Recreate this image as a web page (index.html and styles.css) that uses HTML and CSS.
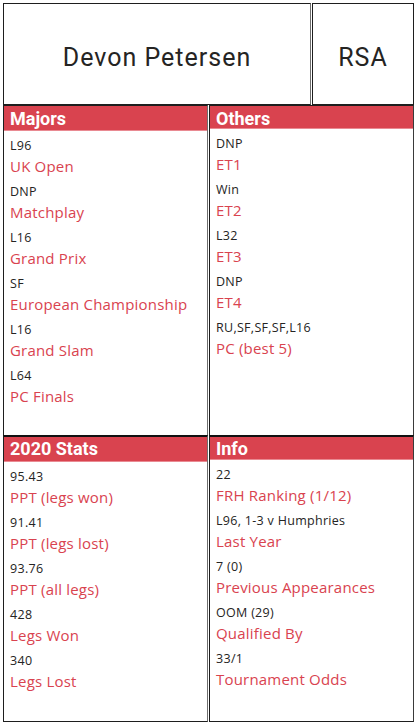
FILE: index.html
```html
<!DOCTYPE html>
<html lang="en">
<head>
<meta charset="utf-8">
<title>Devon Petersen</title>
<link rel="stylesheet" href="styles.css">
</head>
<body>
<div class="page">
  <header class="top">
    <div class="box name">Devon Petersen</div>
    <div class="box country">RSA</div>
  </header>
  <main class="grid">
    <section class="panel upper">
      <h2 class="bar tall">Majors</h2>
      <div class="items">
        <div class="item"><div class="val">L96</div><div class="lbl">UK Open</div></div>
        <div class="item"><div class="val">DNP</div><div class="lbl">Matchplay</div></div>
        <div class="item"><div class="val">L16</div><div class="lbl">Grand Prix</div></div>
        <div class="item"><div class="val">SF</div><div class="lbl">European Championship</div></div>
        <div class="item"><div class="val">L16</div><div class="lbl">Grand Slam</div></div>
        <div class="item"><div class="val">L64</div><div class="lbl">PC Finals</div></div>
      </div>
    </section>
    <section class="panel upper right">
      <h2 class="bar short">Others</h2>
      <div class="items">
        <div class="item"><div class="val">DNP</div><div class="lbl">ET1</div></div>
        <div class="item"><div class="val">Win</div><div class="lbl">ET2</div></div>
        <div class="item"><div class="val">L32</div><div class="lbl">ET3</div></div>
        <div class="item"><div class="val">DNP</div><div class="lbl">ET4</div></div>
        <div class="item"><div class="val">RU,SF,SF,SF,L16</div><div class="lbl">PC (best 5)</div></div>
      </div>
    </section>
    <section class="panel lower">
      <h2 class="bar tall">2020 Stats</h2>
      <div class="items">
        <div class="item"><div class="val">95.43</div><div class="lbl">PPT (legs won)</div></div>
        <div class="item"><div class="val">91.41</div><div class="lbl">PPT (legs lost)</div></div>
        <div class="item"><div class="val">93.76</div><div class="lbl">PPT (all legs)</div></div>
        <div class="item"><div class="val">428</div><div class="lbl">Legs Won</div></div>
        <div class="item"><div class="val">340</div><div class="lbl">Legs Lost</div></div>
      </div>
    </section>
    <section class="panel lower right">
      <h2 class="bar short">Info</h2>
      <div class="items">
        <div class="item"><div class="val">22</div><div class="lbl">FRH Ranking (1/12)</div></div>
        <div class="item"><div class="val">L96, 1-3 v Humphries</div><div class="lbl">Last Year</div></div>
        <div class="item"><div class="val">7 (0)</div><div class="lbl">Previous Appearances</div></div>
        <div class="item"><div class="val">OOM (29)</div><div class="lbl">Qualified By</div></div>
        <div class="item"><div class="val">33/1</div><div class="lbl">Tournament Odds</div></div>
      </div>
    </section>
  </main>
</div>
</body>
</html>
```

FILE: styles.css
```css
* { box-sizing: border-box; }

html, body {
  margin: 0;
  padding: 0;
  background: #ffffff;
}

.page {
  width: 420px;
  padding: 3px 6px 0 3px;
}

.top {
  display: flex;
  gap: 1px;
  height: 102px;
}

.box {
  border: 1px solid #1e1e1e;
  display: flex;
  align-items: center;
  justify-content: center;
  padding-top: 6px;
  font-family: Roboto, "Liberation Sans", sans-serif;
  font-size: 25px;
  letter-spacing: 1px;
  color: #252423;
}

.name {
  width: 308px;
  border-right-color: #6e6e6e;
}

.country {
  flex: 1;
}

.grid {
  display: grid;
  grid-template-columns: 205px 205px;
  grid-template-rows: 330px 287px;
  column-gap: 1px;
}

.panel {
  border: 1px solid #1e1e1e;
  border-right-color: #6e6e6e;
  display: flex;
  flex-direction: column;
}

.panel.right {
  border-right-color: #3a3a3a;
}

.panel.upper {
  border-bottom: none;
}

.panel.lower {
  border-top: 2px solid #111;
}

.bar {
  margin: 0;
  background: #d9434f;
  color: #ffffff;
  font-family: Roboto, "Liberation Sans", sans-serif;
  font-weight: 700;
  font-size: 18px;
  line-height: 23px;
  padding: 1px 0 0 6px;
  border-bottom: 1px solid #e98a92;
}

.lower .bar {
  padding-top: 0;
}

.bar.tall {
  height: 25px;
}

.bar.short {
  height: 23px;
}

.items {
  padding: 6px 0 0 6px;
  display: flex;
  flex-direction: column;
  gap: 6px;
  font-family: "Open Sans", "Noto Sans", sans-serif;
}

.val {
  font-size: 12.5px;
  line-height: 18px;
  letter-spacing: 0.3px;
  color: #252423;
}

.lbl {
  font-size: 15px;
  line-height: 22px;
  letter-spacing: 0.2px;
  color: #d9434f;
}
```
